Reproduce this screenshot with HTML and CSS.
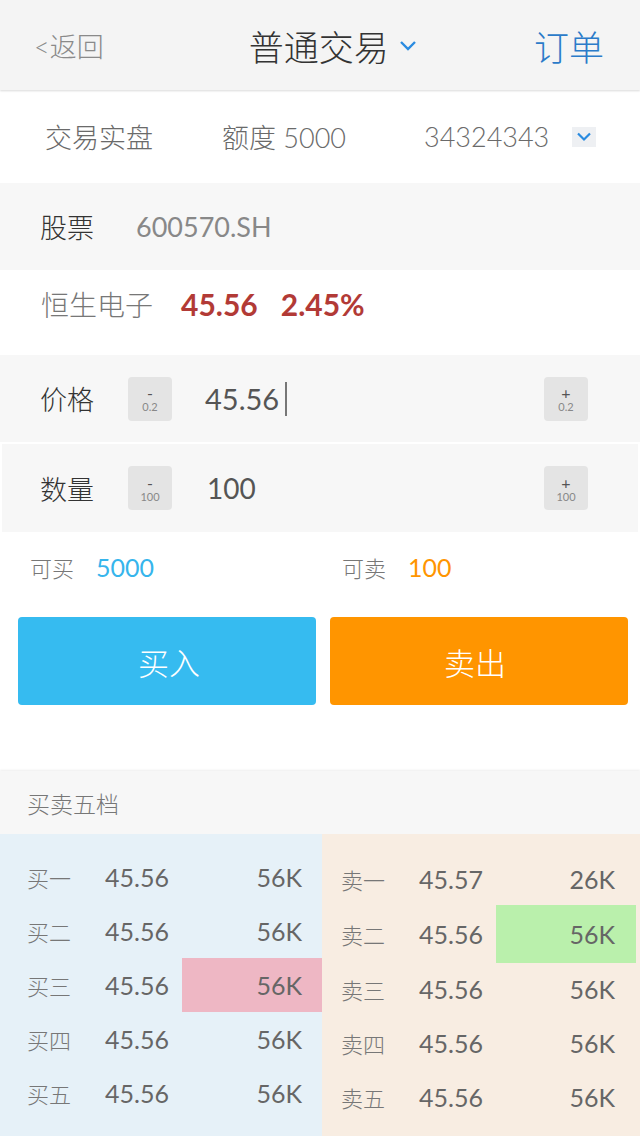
FILE: index.html
```html
<!DOCTYPE html>
<html lang="zh-CN">
<head>
<meta charset="utf-8">
<title>普通交易</title>
<link rel="stylesheet" href="styles.css">
</head>
<body>
<div class="page">
  <header class="topbar">
    <span class="back">&lt;返回</span>
    <span class="title">普通交易
      <svg class="chev-title" width="18" height="12" viewBox="0 0 18 12"><path d="M2 2 L9 9 L16 2" fill="none" stroke="#2a8be0" stroke-width="2.4"/></svg>
    </span>
    <span class="orders">订单</span>
  </header>

  <section class="account">
    <span>交易实盘</span>
    <span>额度 5000</span>
    <span>34324343</span>
    <span class="acct-arrow"><svg width="16" height="10" viewBox="0 0 16 10"><path d="M2 1.5 L8 7.5 L14 1.5" fill="none" stroke="#2a8be0" stroke-width="2.2"/></svg></span>
  </section>

  <section class="stock">
    <span class="lbl">股票</span>
    <span class="code">600570.SH</span>
  </section>

  <section class="quote">
    <span class="name">恒生电子</span>
    <span class="red">45.56</span>
    <span class="red">2.45%</span>
  </section>

  <section class="input-row">
    <span class="lbl">价格</span>
    <span class="step"><span class="sign">-</span><span class="amt">0.2</span></span>
    <span class="val">45.56<span class="cursor"></span></span>
    <span class="step"><span class="sign">+</span><span class="amt">0.2</span></span>
  </section>

  <section class="input-row qty">
    <span class="lbl">数量</span>
    <span class="step"><span class="sign">-</span><span class="amt">100</span></span>
    <span class="val">100</span>
    <span class="step"><span class="sign">+</span><span class="amt">100</span></span>
  </section>

  <section class="avail">
    <div class="avail-item"><span class="al">可买</span><span class="blue">5000</span></div>
    <div class="avail-item"><span class="al">可卖</span><span class="orange">100</span></div>
  </section>

  <section class="actions">
    <button class="btn buy">买入</button>
    <button class="btn sell">卖出</button>
  </section>

  <section class="book-head">买卖五档</section>

  <section class="book">
    <div class="side bid">
      <div class="brow"><span class="bl">买一</span><span class="bp">45.56</span><span class="bq">56K</span></div>
      <div class="brow"><span class="bl">买二</span><span class="bp">45.56</span><span class="bq">56K</span></div>
      <div class="brow"><span class="bl">买三</span><span class="bp">45.56</span><span class="bq pink">56K</span></div>
      <div class="brow"><span class="bl">买四</span><span class="bp">45.56</span><span class="bq">56K</span></div>
      <div class="brow"><span class="bl">买五</span><span class="bp">45.56</span><span class="bq">56K</span></div>
    </div>
    <div class="side ask">
      <div class="brow"><span class="bl">卖一</span><span class="bp">45.57</span><span class="bq">26K</span></div>
      <div class="brow"><span class="bl">卖二</span><span class="bp">45.56</span><span class="bq green">56K</span></div>
      <div class="brow"><span class="bl">卖三</span><span class="bp">45.56</span><span class="bq">56K</span></div>
      <div class="brow"><span class="bl">卖四</span><span class="bp">45.56</span><span class="bq">56K</span></div>
      <div class="brow"><span class="bl">卖五</span><span class="bp">45.56</span><span class="bq">56K</span></div>
    </div>
  </section>
</div>
</body>
</html>
```
FILE: styles.css
```css
* { box-sizing: border-box; }
html, body { margin: 0; padding: 0; background: #fff; }
body {
  font-family: "Lato", "Noto Sans CJK SC", sans-serif;
  color: #666;
}
.page { width: 640px; height: 1136px; overflow: hidden; display: flex; flex-direction: column; }

.topbar {
  height: 90px;
  flex-shrink: 0;
  background: #f4f4f4;
  box-shadow: 0 1px 2px rgba(0,0,0,0.15);
  display: flex;
  align-items: center;
  justify-content: space-between;
  padding: 0 36px 0 34px;
  position: relative;
  z-index: 1;
}
.back { font-size: 27px; color: #8a8a8a; font-weight: 300; }
.title { font-size: 35px; color: #333; font-weight: 300; display: flex; align-items: center; gap: 10px; margin-left: 28px; }
.chev-title { margin-top: 2px; }
.orders { font-size: 35px; color: #2b7bc9; font-weight: 300; }

.account {
  height: 93px;
  flex-shrink: 0;
  display: grid;
  grid-template-columns: 177px 202px 148px 24px;
  align-items: center;
  padding-left: 45px;
  font-size: 27px;
  color: #6a6a6a;
  font-weight: 300;
}
.acct-arrow {
  width: 24px; height: 20px; background: #eef0f3;
  display: flex; align-items: center; justify-content: center;
}

.stock {
  height: 87px;
  flex-shrink: 0;
  background: #f7f7f7;
  display: flex;
  align-items: center;
  padding-left: 40px;
  gap: 42px;
  font-size: 27px;
}
.stock .lbl { color: #333; font-weight: 300; }
.stock .code { color: #888; }

.quote {
  height: 85px;
  flex-shrink: 0;
  display: flex;
  align-items: center;
  padding-left: 41px;
  padding-bottom: 18px;
  font-size: 28px;
}
.quote .name { color: #777; font-weight: 300; margin-right: 28px; }
.quote .red { color: #b23a36; font-weight: 700; font-size: 30px; margin-right: 23px; }

.input-row {
  height: 87px;
  flex-shrink: 0;
  background: #f7f7f7;
  display: flex;
  align-items: center;
  padding-left: 40px;
  padding-right: 52px;
}
.input-row.qty { margin: 2px 2px 0 2px; height: 88px; padding-left: 38px; padding-right: 50px; }
.input-row .lbl { font-size: 27px; color: #333; font-weight: 300; width: 88px; }
.step {
  width: 44px; height: 44px;
  background: #e4e4e4;
  border-radius: 4px;
  display: flex; flex-direction: column; align-items: center; justify-content: center;
  color: #555;
  line-height: 1;
}
.step .sign { font-size: 16px; height: 15px; }
.step .amt { font-size: 11px; color: #888; margin-top: 1px; }
.input-row .val {
  flex: 1;
  font-size: 29px;
  color: #555;
  padding-left: 33px;
  display: flex;
  align-items: center;
}
.input-row.qty .val { padding-left: 35px; font-size: 28px; }
.cursor { display: inline-block; width: 2px; height: 34px; background: #777; margin-left: 6px; }

.avail {
  height: 70px;
  flex-shrink: 0;
  display: flex;
  align-items: center;
  padding-left: 30px;
}
.avail-item { width: 312px; flex-shrink: 0; display: flex; align-items: center; }
.avail .al { font-size: 22px; color: #777; font-weight: 300; margin-right: 22px; }
.avail .blue { font-size: 25px; color: #36b5ec; }
.avail .orange { font-size: 25px; color: #ff9500; }

.actions {
  display: flex;
  flex-shrink: 0;
  gap: 14px;
  padding: 15px 12px 0 18px;
  height: 169px;
}
.btn {
  width: 298px;
  height: 88px;
  border: none;
  border-radius: 4px;
  color: #fff;
  font-family: "Noto Sans CJK SC", sans-serif;
  font-weight: 300;
  font-size: 31px;
  padding: 0;
}
.buy { background: #36bbf0; padding-left: 4px; }
.sell { background: #ff9500; padding-right: 8px; }

.book-head {
  height: 63px;
  flex-shrink: 0;
  background: #f7f7f7;
  box-shadow: 0 -1px 2px rgba(0,0,0,0.07);
  display: flex;
  align-items: center;
  padding-left: 27px;
  font-size: 23px;
  color: #777;
  font-weight: 300;
}

.book { flex: 1; display: flex; }
.side { display: flex; flex-direction: column; }
.bid { width: 322px; background: #e6f1f8; padding-top: 16px; }
.ask { width: 318px; background: #f8ede2; padding-top: 18px; }
.brow { height: 54px; display: flex; align-items: center; }
.bl { font-size: 22px; color: #777; font-weight: 300; width: 78px; }
.bid .bl { margin-left: 27px; }
.ask .bl { margin-left: 19px; }
.bp { font-size: 25px; color: #666; width: 77px; }
.bq {
  width: 140px;
  height: 100%;
  font-size: 25px;
  color: #666;
  display: flex;
  align-items: center;
  justify-content: flex-end;
  padding-right: 20px;
}
.ask .bq { padding-right: 21px; }
.bq.pink { background: #eeb7c4; }
.bq.green { background: #baf0ac; height: 58px; }
.ask .brow:nth-child(2) { height: 56px; }
```
